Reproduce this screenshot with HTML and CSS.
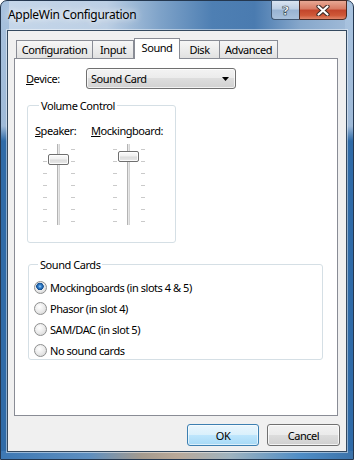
FILE: index.html
```html
<!DOCTYPE html>
<html lang="en">
<head>
    <meta charset="UTF-8">
    <meta name="viewport" content="width=device-width, initial-scale=1.0">
    <title>AppleWin Configuration</title>
    <link rel="stylesheet" href="styles.css">
</head>
<body>

<div class="window">
    <div class="titlebar">
        <span class="title">AppleWin Configuration</span>
        <div class="caption-buttons">
            <span class="cap-btn help">?</span>
            <span class="cap-btn close">
                <svg width="14" height="11" viewBox="0 0 14 11">
                    <path d="M2.5 1.5 L11.5 9.5 M11.5 1.5 L2.5 9.5" stroke="#3b2a26" stroke-width="4.2" stroke-linecap="round"/>
                    <path d="M2.5 1.5 L11.5 9.5 M11.5 1.5 L2.5 9.5" stroke="#ffffff" stroke-width="2.2" stroke-linecap="round"/>
                </svg>
            </span>
        </div>
    </div>

    <div class="client">
        <div class="tabs">
            <div class="tab tab-config">Configuration</div>
            <div class="tab tab-input">Input</div>
            <div class="tab tab-sound active">Sound</div>
            <div class="tab tab-disk">Disk</div>
            <div class="tab tab-advanced">Advanced</div>
        </div>

        <div class="panel">
            <div class="device-row">
                <label class="device-label"><u>D</u>evice:</label>
                <div class="combo">
                    <span>Sound Card</span>
                    <svg class="combo-arrow" width="7" height="4" viewBox="0 0 7 4"><polygon points="0,0 7,0 3.5,4" fill="#000"/></svg>
                </div>
            </div>

            <fieldset class="group volume">
                <legend>Volume Control</legend>
                <div class="volume-cols">
                    <div class="vol-col vol-speaker">
                        <div class="vol-label"><u>S</u>peaker:</div>
                        <div class="slider">
                            <div class="ticks"><i></i><i></i><i></i><i></i><i></i><i></i><i></i></div>
                            <div class="slider-track"><div class="rail"></div><div class="thumb" style="top:10px"></div></div>
                            <div class="ticks"><i></i><i></i><i></i><i></i><i></i><i></i><i></i></div>
                        </div>
                    </div>
                    <div class="vol-col vol-mock">
                        <div class="vol-label"><u>M</u>ockingboard:</div>
                        <div class="slider">
                            <div class="ticks"><i></i><i></i><i></i><i></i><i></i><i></i><i></i></div>
                            <div class="slider-track"><div class="rail"></div><div class="thumb" style="top:7px"></div></div>
                            <div class="ticks"><i></i><i></i><i></i><i></i><i></i><i></i><i></i></div>
                        </div>
                    </div>
                </div>
            </fieldset>

            <fieldset class="group cards">
                <legend>Sound Cards</legend>
                <div class="radio-row"><span class="radio checked"></span>Mockingboards (in slots 4 &amp; 5)</div>
                <div class="radio-row"><span class="radio"></span>Phasor (in slot 4)</div>
                <div class="radio-row"><span class="radio"></span>SAM/DAC (in slot 5)</div>
                <div class="radio-row"><span class="radio"></span>No sound cards</div>
            </fieldset>
        </div>

        <div class="dialog-buttons">
            <button class="btn btn-default">OK</button>
            <button class="btn">Cancel</button>
        </div>
    </div>
</div>

</body>
</html>
```

FILE: styles.css
```css
body {
    margin: 0;
    font-family: "Noto Sans", "Open Sans", sans-serif;
    font-size: 11px;
    letter-spacing: -0.45px;
    color: #000;
    background: #fff;
}

.window {
    width: 354px;
    height: 460px;
    box-sizing: border-box;
    display: flex;
    flex-direction: column;
    padding: 0 6px 7px;
    border: 1px solid #24374f;
    border-radius: 7px 7px 0 0;
    background:
        linear-gradient(to right, #3d78b4 0, #5e8fc0 25%, #a49a8e 40%, #b9a898 50%, #9fb3bf 65%, #4f8dc6 85%, #3c73aa 100%) left bottom / 100% 8px no-repeat,
        linear-gradient(to bottom, #a8c2de 0, #9fbad8 125px, #2f6ba8 140px, #2f6ba8 100%) left top / 8px 100% no-repeat,
        linear-gradient(to bottom, #a9c3df 0, #9fbad8 125px, #2f6ba8 140px, #2f6ba8 100%) right top / 8px 100% no-repeat,
        linear-gradient(to right, #c6d7ea 0, #bccfe4 30%, #7fa3c9 45%, #4e7fb3 60%, #4a7bb0 72%, #86a7cb 85%, #a2bcd9 100%);
}

/* title bar */
.titlebar {
    height: 29px;
    display: flex;
    align-items: flex-start;
}
.title {
    padding-left: 1px;
    line-height: 27px;
    font-size: 12px;
    letter-spacing: -0.3px;
    text-shadow: 0 0 6px rgba(255, 255, 255, 0.9), 0 0 10px rgba(255, 255, 255, 0.7);
}
.caption-buttons {
    margin-left: auto;
    margin-top: -1px;
    display: flex;
}
.cap-btn {
    height: 20px;
    box-sizing: border-box;
    display: flex;
    align-items: center;
    justify-content: center;
    border: 1px solid #3f5671;
}
.help {
    width: 28px;
    border-right: none;
    border-radius: 0 0 0 4px;
    background: linear-gradient(#d9e4f1 0, #bccfe4 45%, #98b3d2 50%, #a9c1dc 100%);
    color: #fff;
    font-weight: bold;
    font-size: 13px;
    font-family: "DejaVu Sans", sans-serif;
    letter-spacing: 0;
    -webkit-text-stroke: 0.5px #2b3a4c;
    text-shadow: 0 0 1px #2b3a4c;
}
.close {
    width: 48px;
    border-radius: 0 0 4px 0;
    border-color: #4d2a22;
    background: linear-gradient(#e7a894 0, #d77a62 45%, #c2452b 50%, #cf5838 80%, #e0866a 100%);
}

/* client area */
.client {
    flex: 1;
    display: flex;
    flex-direction: column;
    background: #f0f0f0;
    border: 1px solid #34495f;
    box-shadow: 0 0 0 1px rgba(255, 255, 255, 0.45);
    padding-top: 7px;
}

.tabs {
    display: flex;
    height: 21px;
    margin-left: 8px;
}
.tab {
    height: 18px;
    margin-top: 2px;
    box-sizing: border-box;
    border: 1px solid #898c95;
    border-bottom: none;
    background: linear-gradient(#f6f6f6 0, #ececec 50%, #e1e1e1 100%);
    text-align: center;
    line-height: 18px;
}
.tab-config { width: 77px; }
.tab-input { width: 41px; border-left: none; }
.tab-sound { width: 46px; }
.tab-disk { width: 40px; border-left: none; }
.tab-advanced { width: 58px; border-left: none; }
.tab.active {
    height: 21px;
    margin-top: 0;
    background: #fff;
    position: relative;
    z-index: 1;
    line-height: 17px;
}

.panel {
    margin: -1px 8px 0 6px;
    height: 358px;
    box-sizing: border-box;
    border: 1px solid #898c95;
    background: #fff;
}

.device-row {
    display: flex;
    align-items: center;
    padding: 9px 0 0 11px;
}
.device-label {
    width: 60px;
}
.combo {
    width: 150px;
    height: 21px;
    box-sizing: border-box;
    display: flex;
    align-items: center;
    padding: 0 6px 0 4px;
    border: 1px solid #707070;
    border-radius: 3px;
    background: linear-gradient(#f3f3f3 0, #ebebeb 50%, #dddddd 50%, #d1d1d1 100%);
    box-shadow: inset 0 0 0 1px rgba(255, 255, 255, 0.7);
}
.combo-arrow {
    margin-left: auto;
}

/* group boxes */
.group {
    margin: 0;
    padding: 0;
    border: 1px solid #d5dfe5;
    border-radius: 3px;
}
.group legend {
    padding: 0 2px;
    margin-left: 4px;
    line-height: 15px;
}

.volume {
    width: 149px;
    box-sizing: border-box;
    margin: 9px 0 0 12px;
    padding: 10px 0 17px 7px;
}
.volume-cols {
    display: flex;
}
.vol-label {
    line-height: 15px;
}
.vol-speaker {
    width: 56px;
}
.vol-speaker .slider {
    margin-left: 8px;
}
.vol-mock .slider {
    margin-left: 22px;
}

.slider {
    display: flex;
    height: 81px;
    margin-top: 6px;
}
.ticks {
    width: 4px;
    display: flex;
    flex-direction: column;
    gap: 11px;
    padding-top: 5px;
}
.ticks i {
    display: block;
    height: 1px;
    background: #cacaca;
}
.slider-track {
    width: 21px;
    margin: 0 2px 0 1px;
    position: relative;
}
.rail {
    width: 3px;
    height: 100%;
    margin: 0 auto;
    background: linear-gradient(to right, #b4b4b4 0, #b4b4b4 1px, #e7e7e7 1px, #e7e7e7 2px, #d4d4d4 2px);
}
.thumb {
    position: absolute;
    left: 0;
    width: 21px;
    height: 11px;
    box-sizing: border-box;
    border: 1px solid #6f6f6f;
    border-radius: 2px;
    background: linear-gradient(#fbfbfb 0, #f0f0f0 45%, #dcdcdc 55%, #e9e9e9 100%);
    box-shadow: inset 0 0 0 1px rgba(255, 255, 255, 0.8);
}

.cards {
    width: 295px;
    box-sizing: border-box;
    margin: 14px 0 0 13px;
    padding: 8px 0 1px 5px;
}
.radio-row {
    display: flex;
    align-items: center;
    height: 15px;
    margin-bottom: 6px;
}
.radio-row:last-child {
    margin-bottom: 0;
}
.radio {
    width: 13px;
    height: 13px;
    box-sizing: border-box;
    border: 1px solid #8e8f8f;
    border-radius: 50%;
    margin-right: 3px;
    background: radial-gradient(circle at 40% 35%, #ffffff 0, #e8e8e8 55%, #cfcfcf 100%);
}
.radio.checked {
    background:
        radial-gradient(circle at 45% 40%, #9fd6ff 0, #3c86d0 1.5px, #114d8f 3.5px, rgba(17, 77, 143, 0) 4px),
        radial-gradient(circle at 40% 35%, #ffffff 0, #e8e8e8 55%, #cfcfcf 100%);
}

/* OK / Cancel */
.dialog-buttons {
    display: flex;
    justify-content: flex-end;
    gap: 8px;
    padding: 8px 6px 0 0;
}
.btn {
    width: 73px;
    height: 22px;
    padding: 0;
    font-family: inherit;
    font-size: 11px;
    letter-spacing: -0.45px;
    color: #000;
    border: 1px solid #707070;
    border-radius: 3px;
    background: linear-gradient(#f2f2f2 0, #ebebeb 50%, #dddddd 50%, #cfcfcf 100%);
    box-shadow: inset 0 0 0 1px rgba(255, 255, 255, 0.75);
}
.btn-default {
    width: 72px;
    border-color: #3c7fb1;
    background: linear-gradient(#eaf6fd 0, #d9f0fc 50%, #bee6fd 50%, #a7d9f5 100%);
    box-shadow: inset 0 0 0 1px rgba(255, 255, 255, 0.6);
}
```
